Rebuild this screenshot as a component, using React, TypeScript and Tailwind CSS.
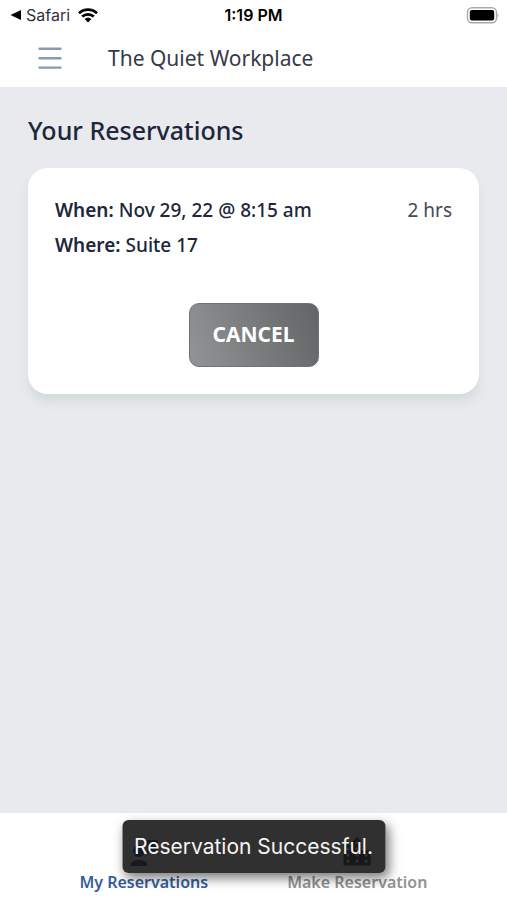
import React from 'react';
import { MdLocationCity } from 'react-icons/md';

interface Reservation {
  id: number;
  when: string;
  where: string;
  duration: string;
}

const reservations: Reservation[] = [
  { id: 1, when: 'Nov 29, 22 @ 8:15 am', where: 'Suite 17', duration: '2 hrs' },
];

const StatusBar: React.FC = () => (
  <div className="grid h-[30px] grid-cols-3 items-center bg-white px-2 font-['Inter',sans-serif] text-base text-black">
    <div className="flex items-center gap-1">
      <svg viewBox="0 0 12 12" className="ml-0.5 size-3" aria-hidden="true">
        <path d="M0.5 6 11 1v10z" fill="currentColor" />
      </svg>
      <span className="text-[#333]">Safari</span>
      <svg viewBox="0 0 20 15" className="ml-1 h-[15px] w-5" fill="none" stroke="currentColor" aria-hidden="true">
        <path d="M1 5.2a13 13 0 0 1 18 0" strokeWidth="2.8" />
        <path d="M4.2 8.6a8.4 8.4 0 0 1 11.6 0" strokeWidth="2.8" />
        <path d="M10 14.5 6.6 11a5 5 0 0 1 6.8 0z" fill="currentColor" stroke="none" />
      </svg>
    </div>
    <span className="text-center font-semibold">1:19 PM</span>
    <svg viewBox="0 0 34 17" className="h-[17px] w-[34px] justify-self-end" aria-hidden="true">
      <rect x="2.5" y="0.7" width="29" height="15" rx="4.5" fill="#fff" stroke="#aaa" strokeWidth="1.4" />
      <rect x="4.8" y="2.9" width="24.4" height="10.6" rx="2" fill="#000" />
      <path d="M32.5 6.4q2 2 0 4z" fill="#aaa" />
    </svg>
  </div>
);

const Header: React.FC = () => (
  <header className="flex h-[57px] items-center bg-white px-[38px]">
    <button type="button" aria-label="Menu" className="text-[#8798b8]">
      <svg viewBox="0 0 24 24" className="size-6" stroke="currentColor" strokeWidth="2.4" strokeLinecap="round">
        <path d="M1.5 1.8h21M1.5 11.2h21M1.5 20.6h21" />
      </svg>
    </button>
    <h1 className="ml-[46px] text-[21px] text-[#363a48]">The Quiet Workplace</h1>
  </header>
);

const ReservationCard: React.FC<{ reservation: Reservation }> = ({ reservation }) => (
  <article className="rounded-[20px] bg-white px-[27px] pt-[25px] pb-[27px] shadow-[0_8px_10px_#d5dcdd]">
    <div className="flex justify-between text-[19px] leading-[35px] text-[#20263b]">
      <div className="font-medium">
        <p>
          <strong className="font-semibold">When:</strong> {reservation.when}
        </p>
        <p>
          <strong className="font-semibold">Where:</strong> {reservation.where}
        </p>
      </div>
      <span className="text-[#444955]">{reservation.duration}</span>
    </div>
    <div className="mt-10 flex justify-center">
      <button
        type="button"
        className="h-16 w-[130px] rounded-[10px] border border-[#707373] bg-linear-70 from-[#929495] to-[#626566] text-[21px] font-bold text-white"
      >
        CANCEL
      </button>
    </div>
  </article>
);

const TabBar: React.FC = () => (
  <nav className="flex h-[87px] bg-white pr-[43px] pl-[37px] font-semibold">
    <a href="#reservations" className="flex flex-1 flex-col items-center justify-end pb-[6px] text-base text-[#355d9b]">
      {/* person with speech bubble */}
      <svg viewBox="0 0 28 28" className="mb-1 size-7" fill="#00135c" aria-hidden="true">
        <circle cx="9" cy="13" r="6" />
        <path d="M1 28v-2q1-4 8-4t8 4v2z" />
        <path d="M17 2h9q2 0 2 2v7q0 2-2 2h-5l-4 4z" />
      </svg>
      My Reservations
    </a>
    <a href="#new" className="flex flex-1 flex-col items-center justify-end pb-[6px] text-base text-[#929292]">
      <MdLocationCity className="size-9 text-[#111]" aria-hidden="true" />
      Make Reservation
    </a>
  </nav>
);

const Toast: React.FC<{ message: string }> = ({ message }) => (
  <div
    role="status"
    className="absolute bottom-[27px] left-1/2 -translate-x-1/2 rounded-md bg-[#1a1a1a]/90 px-3 py-[11px] font-['Inter',sans-serif] text-[21px] leading-[31px] whitespace-nowrap text-[#f4f4f4] shadow-[3px_5px_12px_#0008]"
  >
    {message}
  </div>
);

export default function App() {
  return (
    <div className="relative flex min-h-screen flex-col bg-[#e8eaed] font-['Noto_Sans',sans-serif]">
      <StatusBar />
      <Header />
      <main className="flex-1 px-7 pt-[27px]">
        <h2 className="mb-[21px] text-[25px] leading-[33px] font-medium text-[#20263b]">Your Reservations</h2>
        {reservations.map((reservation) => (
          <ReservationCard key={reservation.id} reservation={reservation} />
        ))}
      </main>
      <TabBar />
      <Toast message="Reservation Successful." />
    </div>
  );
}
